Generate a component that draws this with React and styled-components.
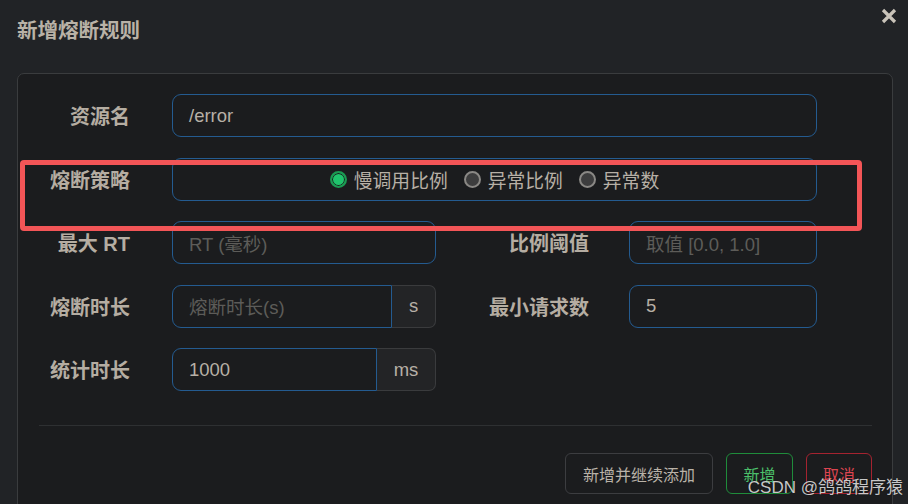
import React from "react";
import styled, { createGlobalStyle } from "styled-components";

const GlobalStyle = createGlobalStyle`
  html, body {
    margin: 0;
    padding: 0;
    background: #212326;
    overflow: hidden;
  }
  * {
    box-sizing: border-box;
  }
`;

const FONT = `"Liberation Sans", "Noto Sans CJK SC", sans-serif`;

const Dialog = styled.div`
  position: relative;
  width: 908px;
  height: 504px;
  background: #212326;
  font-family: ${FONT};
  overflow: hidden;
`;

const Header = styled.div`
  display: flex;
  justify-content: space-between;
  align-items: flex-start;
  height: 73px;
  padding: 19px 10px 0 17px;
`;

const Title = styled.h4`
  margin: 0;
  font-size: 20.5px;
  font-weight: 700;
  color: #b9b2a7;
  line-height: 24px;
`;

const Close = styled.button`
  border: 0;
  background: none;
  padding: 0;
  margin-top: -12px;
  width: 18px;
  height: 18px;
  display: flex;
  align-items: center;
  justify-content: center;
  cursor: pointer;
`;

const Panel = styled.div`
  position: relative;
  margin: 0 15px 0 17px;
  height: 480px;
  background: #1b1c1e;
  border: 1px solid #3a3c3e;
  border-radius: 7px;
  padding: 20px 20px 0 21px;
`;

const Form = styled.div`
  display: flex;
  flex-direction: column;
  gap: 20.5px;
`;

const Row = styled.div`
  display: flex;
  align-items: center;
  height: 43px;
`;

const Label = styled.label`
  width: ${(p) => p.$w}px;
  margin-right: ${(p) => p.$gap}px;
  text-align: right;
  font-size: 20px;
  font-weight: 700;
  color: #b5ada2;
  white-space: nowrap;
`;

const Field = styled.div`
  display: flex;
  width: ${(p) => p.$w}px;
  height: 43px;
`;

const Input = styled.div`
  flex: 1;
  display: flex;
  align-items: center;
  padding: 0 16px;
  border: 1px solid #245b90;
  border-radius: ${(p) => (p.$joined ? "9px 0 0 9px" : "9px")};
  background: #1b1c1e;
  font-size: 18.5px;
  color: ${(p) => (p.$placeholder ? "#5d5c59" : "#b7b0a6")};
  white-space: nowrap;
`;

const Addon = styled.div`
  width: ${(p) => p.$w}px;
  display: flex;
  align-items: center;
  justify-content: center;
  background: #232426;
  border: 1px solid #3a3b3d;
  border-left: 0;
  border-radius: 0 7px 7px 0;
  font-size: 18.5px;
  color: #b7b0a6;
`;

const RadioBox = styled.div`
  flex: 1;
  display: flex;
  align-items: center;
  justify-content: center;
  gap: 16px;
  border: 1px solid #245b90;
  border-radius: 9px;
`;

const RadioItem = styled.span`
  display: flex;
  align-items: center;
  gap: 7px;
  font-size: 18.8px;
  color: #b7b0a6;
`;

const Dot = styled.span`
  width: 17px;
  height: 17px;
  border-radius: 50%;
  background: ${(p) => (p.$on ? "#1fc46c" : "#3d3d3e")};
  border: 2px solid ${(p) => (p.$on ? "#1b9a52" : "#8a8885")};
  box-shadow: ${(p) => (p.$on ? "inset 0 0 0 1px #1b1c1e" : "none")};
`;

const Highlight = styled.div`
  position: absolute;
  left: 2px;
  top: 86px;
  width: 842px;
  height: 71px;
  border: 5px solid #f35557;
  border-radius: 4px;
  pointer-events: none;
`;

const Divider = styled.hr`
  margin: 34px 0 0;
  border: 0;
  border-top: 1px solid #2e3032;
`;

const Footer = styled.div`
  display: flex;
  justify-content: flex-end;
  gap: 13px;
  padding-top: 27px;
`;

const Button = styled.button`
  width: ${(p) => p.$w}px;
  height: 41px;
  padding: 0;
  background: transparent;
  border: 1px solid ${(p) => p.$border};
  border-radius: 6px;
  color: ${(p) => p.$color};
  font-family: ${FONT};
  font-size: 16px;
`;

const Watermark = styled.div`
  position: absolute;
  right: 5px;
  bottom: 6px;
  font-family: ${FONT};
  font-size: 17px;
  color: rgba(235, 235, 235, 0.85);
  text-shadow: 0 0 1px rgba(0, 0, 0, 0.6);
  white-space: nowrap;
`;

export default function App() {
  return (
    <>
      <GlobalStyle />
      <Dialog>
        <Header>
          <Title>新增熔断规则</Title>
          <Close aria-label="close">
            <svg width="16" height="16" viewBox="0 0 16 16">
              <path d="M2 2 L14 14 M14 2 L2 14" stroke="#c9c3b9" strokeWidth="3.2" strokeLinecap="butt" />
            </svg>
          </Close>
        </Header>
        <Panel>
          <Form>
            <Row>
              <Label $w={91} $gap={42}>资源名</Label>
              <Field $w={645}>
                <Input>/error</Input>
              </Field>
            </Row>
            <Row>
              <Label $w={91} $gap={42}>熔断策略</Label>
              <Field $w={645}>
                <RadioBox>
                  <RadioItem><Dot $on />慢调用比例</RadioItem>
                  <RadioItem><Dot />异常比例</RadioItem>
                  <RadioItem><Dot />异常数</RadioItem>
                </RadioBox>
              </Field>
            </Row>
            <Row>
              <Label $w={91} $gap={42}>最大 RT</Label>
              <Field $w={264}>
                <Input $placeholder>RT (毫秒)</Input>
              </Field>
              <Label $w={153} $gap={40}>比例阈值</Label>
              <Field $w={188}>
                <Input $placeholder>取值 [0.0, 1.0]</Input>
              </Field>
            </Row>
            <Row>
              <Label $w={91} $gap={42}>熔断时长</Label>
              <Field $w={264}>
                <Input $placeholder $joined>熔断时长(s)</Input>
                <Addon $w={44}>s</Addon>
              </Field>
              <Label $w={153} $gap={40}>最小请求数</Label>
              <Field $w={188}>
                <Input>5</Input>
              </Field>
            </Row>
            <Row>
              <Label $w={91} $gap={42}>统计时长</Label>
              <Field $w={264}>
                <Input $joined>1000</Input>
                <Addon $w={59}>ms</Addon>
              </Field>
            </Row>
          </Form>
          <Divider />
          <Footer>
            <Button $w={148} $border="#3c3d40" $color="#b9b2a8">新增并继续添加</Button>
            <Button $w={67} $border="#1f8c3b" $color="#4cc06b">新增</Button>
            <Button $w={66} $border="#a52330" $color="#dc4450">取消</Button>
          </Footer>
          <Highlight />
        </Panel>
        <Watermark>CSDN @鸽鸽程序猿</Watermark>
      </Dialog>
    </>
  );
}
